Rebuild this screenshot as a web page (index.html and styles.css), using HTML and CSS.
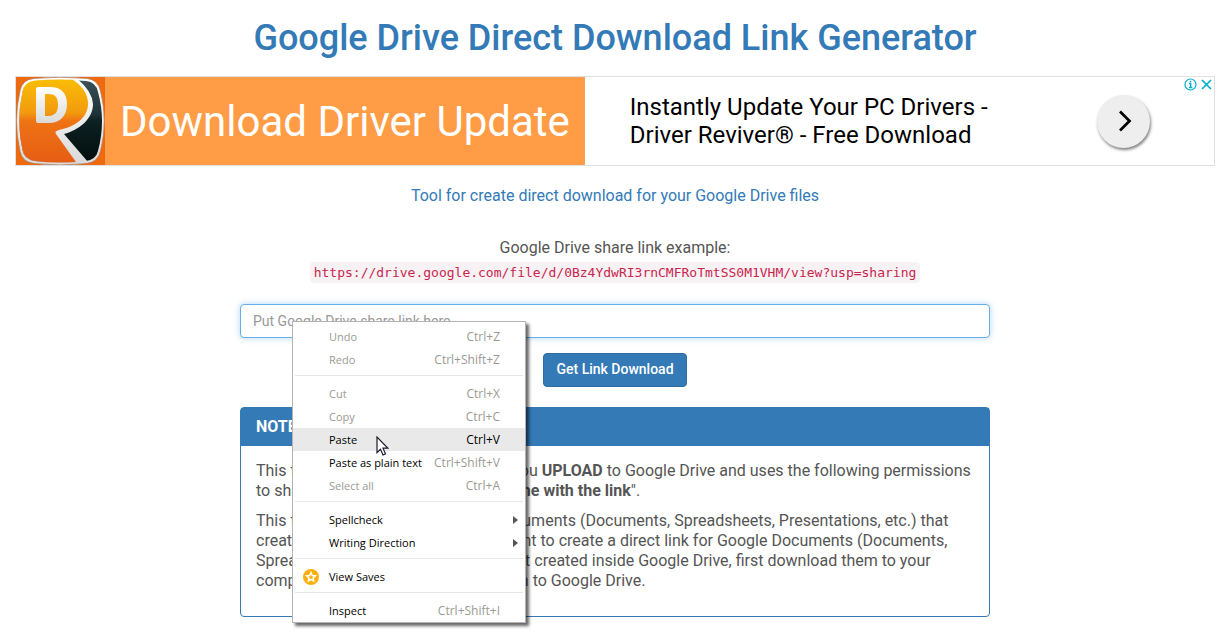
FILE: index.html
```html
<!DOCTYPE html>
<html lang="en">
<head>
<meta charset="utf-8">
<meta name="viewport" content="width=device-width, initial-scale=1">
<title>Google Drive Direct Download Link Generator</title>
<link rel="stylesheet" href="styles.css">
</head>
<body>
<main class="page">
  <h1 class="title">Google Drive Direct Download Link Generator</h1>

  <section class="ad">
    <div class="ad-brand">
      <svg class="ad-logo" viewBox="0 0 89 88" aria-hidden="true">
        <defs>
          <linearGradient id="gold" x1="0" y1="0" x2="0" y2="1">
            <stop offset="0" stop-color="#f9bd05"/><stop offset=".4" stop-color="#f39a0e"/>
            <stop offset=".5" stop-color="#ee7314"/><stop offset="1" stop-color="#e65d14"/>
          </linearGradient>
          <linearGradient id="dark" x1="0" y1="0" x2="0" y2="1">
            <stop offset="0" stop-color="#3a5157"/><stop offset=".42" stop-color="#1d3236"/>
            <stop offset=".5" stop-color="#0d2022"/><stop offset="1" stop-color="#020e0e"/>
          </linearGradient>
          <linearGradient id="silver" x1="0" y1="0" x2="0" y2="1">
            <stop offset="0" stop-color="#ffffff"/><stop offset="1" stop-color="#dadada"/>
          </linearGradient>
        </defs>
        <rect width="89" height="88" fill="#ee6a10"/>
        <path d="M18 1.500Q44-1 71 1.500Q82 2.500 84.500 14Q92 44 84.500 74Q82 85 71 86.500Q44 89.500 18 86.500Q6 85 4 74Q-3 44 4 14Q6 2.500 18 1.500Z" fill="url(#silver)" stroke="#a5714f" stroke-width=".6"/>
        <path d="M19 4Q44 2 70 4Q80 5 82 15Q90 44 82 74Q80 82.500 70 84Q44 86.500 19 84Q8 82 6.500 73Q0 44 6.500 15Q8 5 19 4Z" fill="url(#dark)"/>
        <path d="M19 3Q40 1.500 62 2.500Q76 14 77 27C77 42 63 53 48 57L72 85Q44 87.500 19 84Q8 82 6.500 73Q0 44 6.500 15Q8 5 19 3Z" fill="url(#silver)"/>
        <path d="M19 3.500Q38 2 57 2.800Q72 13 72 27C72 41 58 50 43 53Q38 54 40 57L60 85Q38 86.500 19 84Q8 82 6.500 73Q0 44 6.500 15Q8 5 19 3.500Z" fill="url(#gold)"/>
        <path fill-rule="evenodd" d="M22 10H34C45 10 51 16 51 27C51 39 44 46 33 46H22Q20 46 20 44V12Q20 10 22 10ZM29 17V39H32C39 39 42 35 42 28C42 20 39 17 32 17Z" fill="url(#silver)"/>
      </svg>
      <a class="ad-name" href="#">Download Driver Update</a>
    </div>
    <p class="ad-copy">Instantly Update Your PC Drivers -<br>Driver Reviver® - Free Download</p>
    <button class="ad-go" type="button" aria-label="Open advertisement">
      <svg width="14" height="24" viewBox="0 0 14 24" aria-hidden="true"><path d="M2 2.500L11.500 12L2 21.500" fill="none" stroke="#000" stroke-width="2.700"/></svg>
    </button>
    <div class="ad-choices">
      <svg width="13" height="13" viewBox="0 0 13 13" aria-hidden="true"><circle cx="6.500" cy="6.500" r="5.500" fill="none" stroke="#00aecd" stroke-width="1.200"/><path d="M5 5.500H6.700V9.500M5 9.500H8.400M6.500 2.800V4.200" fill="none" stroke="#00aecd" stroke-width="1.400"/></svg>
      <svg width="11" height="13" viewBox="0 0 11 13" aria-hidden="true"><path d="M1 2L10 11M10 2L1 11" stroke="#00aecd" stroke-width="1.700"/></svg>
    </div>
  </section>

  <p class="tagline">Tool for create direct download for your Google Drive files</p>

  <p class="example">Google Drive share link example:<br><code>https://drive.google.com/file/d/0Bz4YdwRI3rnCMFRoTmtSS0M1VHM/view?usp=sharing</code></p>

  <div class="tool">
    <form class="form">
      <input class="field" type="text" aria-label="Google Drive share link" placeholder="Put Google Drive share link here...">
      <button class="submit" type="button">Get Link Download</button>
    </form>

    <section class="panel">
      <h2 class="panel-head">NOTES</h2>
      <div class="panel-body">
        <p>This tool can only be used with files you <b>UPLOAD</b> to Google Drive and uses the following permissions to share the files or your folder: "<b>Anyone with the link</b>".</p>
        <p>This tool does not accept Google Documents (Documents, Spreadsheets, Presentations, etc.) that created inside Google Drive. If you want to create a direct link for Google Documents (Documents, Spreadsheets, Presentations, etc.) that created inside Google Drive, first download them to your computer, and then upload them again to Google Drive.</p>
      </div>
    </section>

    <div class="menu" role="menu">
      <button class="item" disabled><span>Undo</span><span class="key">Ctrl+Z</span></button>
      <button class="item" disabled><span>Redo</span><span class="key">Ctrl+Shift+Z</span></button>
      <hr>
      <button class="item" disabled><span>Cut</span><span class="key">Ctrl+X</span></button>
      <button class="item" disabled><span>Copy</span><span class="key">Ctrl+C</span></button>
      <button class="item active"><span>Paste</span><span class="key">Ctrl+V</span>
        <svg class="cursor" width="13" height="20" viewBox="0 0 13 20" aria-hidden="true"><path d="M1 1V16.500L4.500 13.200L7 19L9.500 18L7 12.200H11.800Z" fill="#fff" stroke="#1c1c30" stroke-width="1.200"/></svg>
      </button>
      <button class="item"><span>Paste as plain text</span><span class="key">Ctrl+Shift+V</span></button>
      <button class="item" disabled><span>Select all</span><span class="key">Ctrl+A</span></button>
      <hr>
      <button class="item sub"><span>Spellcheck</span></button>
      <button class="item sub"><span>Writing Direction</span></button>
      <hr>
      <button class="item saves">
        <svg width="16" height="16" viewBox="0 0 16 16" aria-hidden="true"><circle cx="8" cy="8" r="8" fill="#fdb00c"/><path d="M8 3.600L9.300 6.500L12.400 6.800L10.100 8.900L10.700 12L8 10.400L5.300 12L5.900 8.900L3.600 6.800L6.700 6.500Z" fill="none" stroke="#fff" stroke-width="1.500"/></svg>
        <span>View Saves</span></button>
      <hr>
      <button class="item"><span>Inspect</span><span class="key">Ctrl+Shift+I</span></button>
    </div>
  </div>
</main>
</body>
</html>
```
FILE: styles.css
```css
* { box-sizing: border-box; }
body {
  margin: 0;
  background: #fff;
  color: #555;
  font: 16px/20px Roboto, sans-serif;
}
p, h1, h2 { margin: 0; }
button { font-family: inherit; }
.page { padding: 18px 16px 18px 15px; }
.title {
  color: #337ab7;
  font-size: 36px;
  font-weight: 500;
  line-height: 40px;
  text-align: center;
}
.ad {
  position: relative;
  display: flex;
  align-items: center;
  margin-top: 18px;
  border: 1px solid #e0e0e0;
}
.ad-brand { display: flex; align-items: center; background: #ff9c45; }
.ad-logo { display: block; width: 89px; height: 88px; }
.ad-name {
  padding: 2px 15px 0;
  color: #fff;
  font-size: 42px;
  line-height: 48px;
  text-decoration: none;
  white-space: nowrap;
}
.ad-copy {
  flex: 1;
  padding-left: 45px;
  color: #000;
  font-size: 24px;
  line-height: 28px;
}
.ad-go {
  display: grid;
  place-items: center;
  width: 53px;
  height: 53px;
  margin-right: 64px;
  padding: 0 0 0 2px;
  border: 0;
  border-radius: 50%;
  background: #eee;
  box-shadow: 1px 2px 3px rgba(0, 0, 0, .5);
}
.ad-choices {
  position: absolute;
  top: 1px;
  right: 2px;
  display: flex;
  gap: 4px;
}
.tagline { margin-top: 20px; color: #337ab7; text-align: center; }
.example { margin-top: 30px; line-height: 24px; text-align: center; }
code {
  padding: 3px 4px;
  border-radius: 4px;
  background: #f9f2f4;
  color: #c7254e;
  font: 13px "DejaVu Sans Mono", monospace;
}
.tool { position: relative; max-width: 750px; margin: 20px auto 0; }
.form { display: flex; flex-direction: column; align-items: center; gap: 15px; }
.field {
  width: 100%;
  height: 34px;
  padding: 6px 12px;
  border: 1px solid #66afe9;
  border-radius: 4px;
  box-shadow: 0 0 6px rgba(102, 175, 233, .5);
  color: #555;
  font: 14px/20px Roboto, sans-serif;
}
.field::placeholder { color: #999; }
.submit {
  height: 34px;
  padding: 0 12px 2px;
  border: 1px solid #2e6da4;
  border-radius: 4px;
  background: #337ab7;
  color: #fff;
  font-size: 14px;
  font-weight: 500;
}
.panel { margin-top: 20px; border: 1px solid #337ab7; border-radius: 4px; }
.panel-head {
  padding: 9px 15px;
  background: #337ab7;
  color: #fff;
  font-size: 16px;
  font-weight: 700;
  line-height: 20px;
}
.panel-body { padding: 15px; }
.panel-body p { margin-bottom: 10px; }
.menu {
  position: absolute;
  top: 17px;
  left: 52px;
  width: 234px;
  padding-top: 3px;
  border: 1px solid #b4b4b4;
  background: #fff;
  box-shadow: 3px 3px 3px rgba(0, 0, 0, .6);
}
.menu hr { height: 1px; margin: 4px 2px 6px; border: 0; background: #e6e6e6; }
.item {
  position: relative;
  display: flex;
  align-items: center;
  justify-content: space-between;
  width: 100%;
  height: 23px;
  padding: 0 25px 0 36px;
  border: 0;
  background: none;
  color: #000;
  font: 11px/23px "Open Sans", sans-serif;
  text-align: left;
  white-space: nowrap;
}
.key { font-size: 12px; }
.item:disabled, .key { color: #9a9a92; }
.active { background: #e9e9e9; }
.active .key { color: #000; }
.cursor { position: absolute; top: 8px; left: 83px; }
.sub { padding-right: 7px; }
.sub::after {
  content: "";
  border: 4px solid transparent;
  border-right: 0;
  border-left: 5px solid #555;
}
.saves { justify-content: flex-start; gap: 10px; padding-left: 10px; }
```
